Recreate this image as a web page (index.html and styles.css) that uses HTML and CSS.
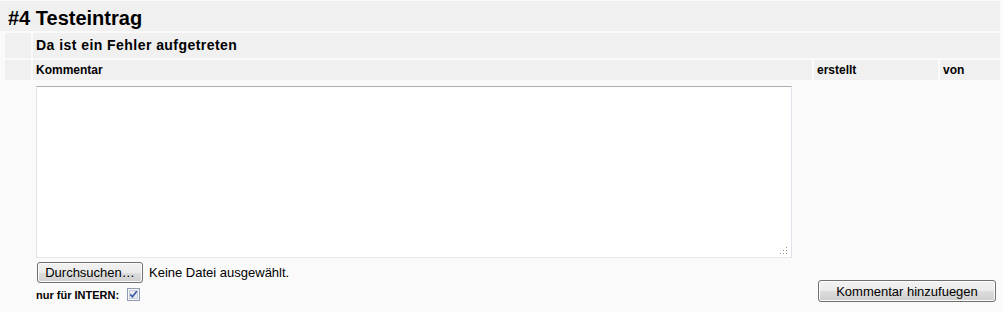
FILE: index.html
```html
<!DOCTYPE html>
<html lang="de">
<head>
<meta charset="utf-8">
<title>#4 Testeintrag</title>
<link rel="stylesheet" href="styles.css">
</head>
<body>
<h1 class="title">#4 Testeintrag</h1>
<div class="grid">
  <div class="cell head"></div>
  <div class="cell head subject">Da ist ein Fehler aufgetreten</div>

  <div class="cell head"></div>
  <div class="cell head label">Kommentar</div>
  <div class="cell head label col-created">erstellt</div>
  <div class="cell head label">von</div>

  <div class="cell"></div>
  <div class="cell content">
    <div class="ta-wrap">
      <textarea class="comment"></textarea>
      <svg class="grip" width="8" height="8" viewBox="0 0 8 8" aria-hidden="true">
        <rect x="6" y="0" width="1" height="1" fill="#9a9a9a"/>
        <rect x="3" y="3" width="1" height="1" fill="#9a9a9a"/>
        <rect x="6" y="3" width="1" height="1" fill="#9a9a9a"/>
        <rect x="0" y="6" width="1" height="1" fill="#9a9a9a"/>
        <rect x="3" y="6" width="1" height="1" fill="#9a9a9a"/>
        <rect x="6" y="6" width="1" height="1" fill="#9a9a9a"/>
      </svg>
    </div>
    <div class="file-row">
      <span class="btn btn-browse">Durchsuchen…</span>
      <span class="file-name">Keine Datei ausgewählt.</span>
    </div>
    <div class="intern-row">
      <span class="intern-label">nur für INTERN:</span>
      <svg class="check" width="13" height="13" viewBox="0 0 13 13" aria-hidden="true">
        <rect x="0.5" y="0.5" width="12" height="12" fill="#f6f7f9" stroke="#8f9bb3"/>
        <rect x="2.5" y="2.5" width="8" height="8" fill="#e6e9ef" stroke="#c9cfda"/>
        <path d="M3.3 6.4 L5.4 8.7 L9.8 3.2" fill="none" stroke="#3b56a3" stroke-width="1.6"/>
      </svg>
    </div>
  </div>
  <div class="cell submit-cell">
    <span class="btn btn-submit">Kommentar hinzufuegen</span>
  </div>
</div>
</body>
</html>
```
FILE: styles.css
```css
html, body {
  margin: 0;
  padding: 0;
  background: #fafafa;
}
body {
  padding-top: 1px;
  font-family: "Liberation Sans", Arial, sans-serif;
  color: #000;
}
.title {
  margin: 0;
  width: 1000px;
  height: 30px;
  padding: 5px 0 0 8px;
  box-sizing: border-box;
  line-height: 25px;
  font-size: 20px;
  font-weight: bold;
  background: #f0f0f0;
}
.grid {
  display: grid;
  grid-template-columns: 26px 779px 124px 60px;
  grid-template-rows: 25px 20px auto;
  gap: 2px;
  margin: 2px 0 0 5px;
}
.cell.head {
  background: #f0f0f0;
}
.subject {
  grid-column: 2 / 5;
  padding-left: 3px;
  font-size: 14px;
  letter-spacing: 0.45px;
  font-weight: bold;
  line-height: 25px;
}
.label {
  padding-left: 3px;
  font-size: 12px;
  font-weight: bold;
  line-height: 20px;
}
.content {
  padding: 4px 0 2px 3px;
}
.ta-wrap {
  position: relative;
  width: 756px;
  height: 172px;
}
.comment {
  display: block;
  width: 756px;
  height: 172px;
  margin: 0;
  padding: 2px;
  box-sizing: border-box;
  border: 1px solid #e2e3ea;
  border-top-color: #abadb3;
  border-bottom-color: #e3e9ef;
  background: #fff;
  resize: none;
  outline: none;
}
.grip {
  position: absolute;
  right: 4px;
  bottom: 3px;
}
.file-row {
  display: flex;
  align-items: center;
  margin-top: 4px;
}
.btn {
  display: inline-flex;
  align-items: center;
  justify-content: center;
  box-sizing: border-box;
  border: 1px solid #707070;
  border-radius: 3px;
  background: linear-gradient(#f2f2f2 0%, #ebebeb 50%, #dddddd 51%, #cfcfcf 100%);
  box-shadow: inset 0 0 0 1px #fbfbfb;
  font-family: "Liberation Sans", Arial, sans-serif;
  font-size: 13px;
  color: #000;
}
.btn-browse {
  width: 106px;
  height: 21px;
  margin-left: 1px;
}
.file-name {
  margin-left: 6px;
  font-size: 13px;
}
.intern-row {
  display: flex;
  align-items: center;
  margin-top: 5px;
  height: 13px;
}
.intern-label {
  font-size: 11px;
  font-weight: bold;
}
.check {
  display: block;
  margin-left: 8px;
}
.submit-cell {
  grid-column: 3 / 5;
  align-self: end;
  padding: 0 0 1px 4px;
}
.btn-submit {
  width: 178px;
  height: 22px;
}
```
